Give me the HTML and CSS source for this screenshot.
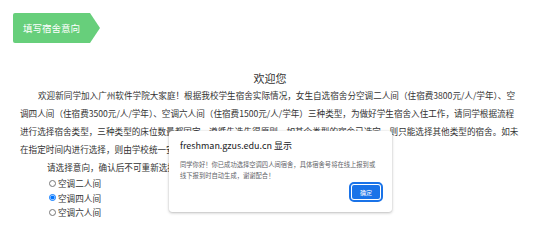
FILE: index.html
```html
<!DOCTYPE html>
<html lang="zh-CN">
<head>
    <meta charset="UTF-8">
    <meta name="viewport" content="width=device-width, initial-scale=1.0">
    <title>填写宿舍意向</title>
    <link rel="stylesheet" href="styles.css">
</head>
<body>
    <div class="step-bar">
        <div class="step-tab">填写宿舍意向</div>
    </div>

    <div class="main">
        <h2 class="welcome">欢迎您</h2>
        <p class="intro">欢迎新同学加入广州软件学院大家庭！根据我校学生宿舍实际情况，女生自选宿舍分空调二人间（住宿费3800元/人/学年）、空调四人间（住宿费3500元/人/学年）、空调六人间（住宿费1500元/人/学年）三种类型，为做好学生宿舍入住工作，请同学根据流程进行选择宿舍类型，三种类型的床位数量都固定，遵循先选先得原则，如某个类型的宿舍已选完，则只能选择其他类型的宿舍。如未在指定时间内进行选择，则由学校统一安排。</p>

        <div class="choose">
            <p class="choose-tip">请选择意向，确认后不可重新选择！</p>
            <label class="room"><input type="radio" name="room" value="2">空调二人间</label>
            <label class="room"><input type="radio" name="room" value="4" checked>空调四人间</label>
            <label class="room"><input type="radio" name="room" value="6">空调六人间</label>
        </div>
    </div>

    <!-- browser alert -->
    <div class="alert-box">
        <div class="alert-title">freshman.gzus.edu.cn 显示</div>
        <div class="alert-msg">同学你好！你已成功选择空调四人间宿舍，具体宿舍号将在线上报到或线下报到时自动生成，谢谢配合！</div>
        <div class="alert-actions">
            <button class="alert-ok">确定</button>
        </div>
    </div>
</body>
</html>
```

FILE: styles.css
```css
body {
    margin: 0;
    font-family: "Noto Sans CJK SC", "Noto Sans", sans-serif;
    color: #333;
    background: #fff;
}
.step-bar {
    padding: 13px 0 0 13px;
}
.step-tab {
    width: 77px;
    height: 30px;
    padding-left: 10px;
    background-color: #67cf7b;
    color: #fff;
    font-size: 9.5px;
    line-height: 30px;
    clip-path: polygon(0 0, 77px 0, 87px 50%, 77px 100%, 0 100%);
    border-radius: 2px 0 0 2px;
}
.main {
    padding: 0 34px 0 20px;
}
.welcome {
    margin: 28px 0 0;
    font-size: 11px;
    line-height: 14px;
    font-weight: normal;
    text-align: center;
}
.intro {
    margin: 1px 0 0;
    font-size: 8.6px;
    line-height: 18px;
    text-indent: 18px;
}
.choose {
    font-size: 8.6px;
}
.choose-tip {
    margin: 0;
    line-height: 18px;
    text-indent: 27px;
}
.room {
    display: flex;
    align-items: center;
    height: 14.5px;
    padding-left: 28px;
}
.room input {
    width: 7px;
    height: 7px;
    margin: 0 2px 0 1px;
}
.alert-box {
    position: absolute;
    left: 169px;
    top: 131px;
    width: 223px;
    height: 81px;
    box-sizing: border-box;
    padding: 9px 12px 0 11px;
    background: #fff;
    border-radius: 3px;
    box-shadow: 0 1px 3px rgba(0, 0, 0, 0.25), 0 0 1px rgba(0, 0, 0, 0.2);
}
.alert-title {
    font-size: 9px;
    line-height: 12px;
    color: #202124;
}
.alert-msg {
    margin-top: 7px;
    font-size: 6.3px;
    line-height: 11px;
    color: #5f6368;
}
.alert-actions {
    display: flex;
    justify-content: flex-end;
    margin-top: 4px;
}
.alert-ok {
    width: 28px;
    height: 14px;
    padding: 0;
    border: none;
    border-radius: 2px;
    background-color: #1a73e8;
    color: #fff;
    font-family: inherit;
    font-size: 6px;
    outline: 2px solid #1a73e8;
    outline-offset: 1px;
}
```
